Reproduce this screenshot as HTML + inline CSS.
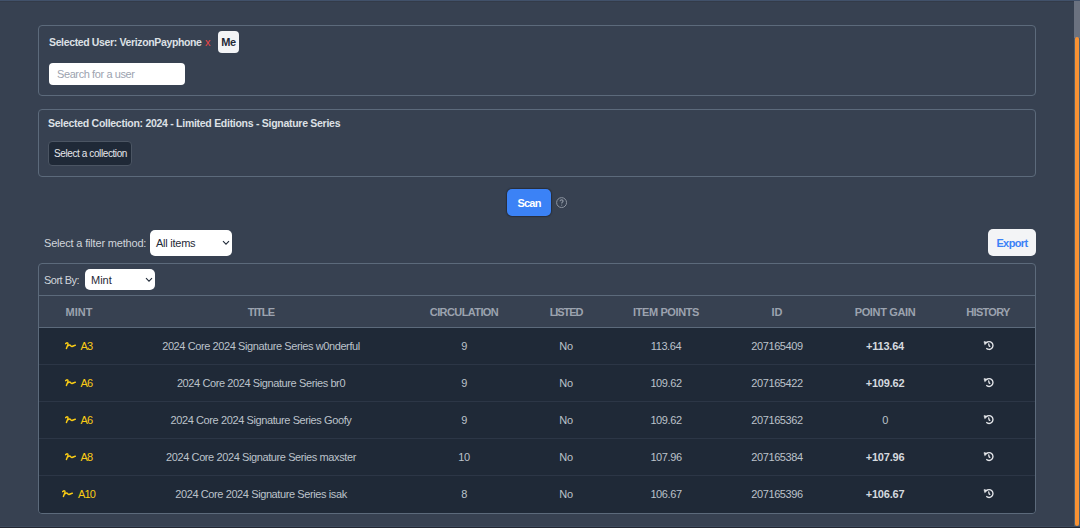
<!DOCTYPE html>
<html><head><meta charset="utf-8">
<style>
*{box-sizing:border-box;margin:0;padding:0}
html,body{width:1080px;height:528px;overflow:hidden;background:#374151;font-family:"Liberation Sans",sans-serif;color:#d1d5db}
.abs{position:absolute}
.nw{white-space:nowrap}
.topline{left:0;top:0;width:1080px;height:1px;background:#41516a}
.topline2{left:0;top:1px;width:1080px;height:1px;background:#333b49}
.botline{left:0;top:527px;width:1080px;height:1px;background:#222631}
.botline2{left:0;top:526px;width:1080px;height:1px;background:#3d4a5c}
.sb{left:1074px;top:1px;width:6px;height:40px;background:#6b7280}
.sb2{left:1074px;top:38px;width:6px;height:490px;background:#4f6070}
.thumb{left:1075px;top:37px;width:4px;height:489px;background:#f99233;border-radius:2px}
.box{border:1px solid #5c6a7b;border-radius:4px}
.b1{left:38px;top:25px;width:998px;height:71px}
.b2{left:38px;top:109px;width:998px;height:68px}
.h{font-size:11px;font-weight:bold;color:#dde0e5;white-space:nowrap;line-height:13px}
.btnw{background:#f3f4f6;border-radius:4px;color:#1f2937;font-weight:bold;font-size:11px;text-align:center}
.inp{background:#fff;border-radius:4px;color:#9ca3af;font-size:11px}
.sel{background:#fff;border-radius:5px;color:#1f2937;font-size:11px;white-space:nowrap}
.scan{left:507px;top:189px;width:44px;height:27px;background:#3b82f6;border-radius:5px;color:#fff;font-weight:bold;font-size:11px;text-align:center;line-height:29px;letter-spacing:-0.8px;box-shadow:0 0 1px 1px rgba(30,35,45,.6)}
.tbl{left:38px;top:263px;width:998px;height:251px;border:1px solid #5c6a7b;border-radius:4px;overflow:hidden}
table{border-collapse:collapse;table-layout:fixed;width:996px}
th{height:32px;font-size:11px;font-weight:bold;color:#9ca3af;text-align:center;border-top:1px solid #5c6a7b;border-bottom:1px solid #5c6a7b;background:#374151;padding-bottom:0px;white-space:nowrap}
td{height:37px;font-size:11px;color:#bcc2ca;text-align:center;border-bottom:1px solid #2c3646;background:#1f2937;padding-bottom:0px;white-space:nowrap;letter-spacing:-0.4px}
tr:last-child td{border-bottom:none}
.mint{color:#facc15;letter-spacing:-0.8px}
.mint svg{vertical-align:0px;margin-right:4px;margin-left:-1px}
.pg{font-weight:bold;color:#d5d9df;letter-spacing:-0.2px}
.chev{position:absolute}
</style></head>
<body>
<div class="abs topline"></div>
<div class="abs topline2"></div>

<div class="abs box b1"></div>
<div class="abs h" style="left:49px;top:36px;font-size:10.5px;letter-spacing:-0.36px">Selected User: VerizonPayphone</div>
<div class="abs nw" style="left:205px;top:36px;font-size:11px;line-height:13px;color:#ef4444">x</div>
<div class="abs btnw" style="left:218px;top:31px;width:21px;height:22px;line-height:22px;letter-spacing:-0.5px">Me</div>
<div class="abs inp nw" style="left:49px;top:63px;width:136px;height:22px;line-height:22px;padding-left:8px;letter-spacing:-0.4px">Search for a user</div>

<div class="abs box b2"></div>
<div class="abs h" style="left:48px;top:117px;font-size:10.5px;letter-spacing:-0.28px">Selected Collection: 2024 - Limited Editions - Signature Series</div>
<div class="abs nw" style="left:48px;top:141px;width:84px;height:25px;background:#1f2937;border:1px solid #4b5563;border-radius:4px;font-size:10px;color:#e5e7eb;line-height:23px;padding-left:5px;letter-spacing:-0.4px">Select a collection</div>

<div class="abs scan">Scan</div>
<svg class="abs" style="left:555px;top:196px" width="13" height="13" viewBox="0 0 13 13"><circle cx="6.6" cy="6.6" r="4.95" fill="none" stroke="#8d95a1" stroke-width="1"/><path d="M5.1 5.3 C5.1 4.2 6 3.8 6.6 3.8 C7.4 3.8 8.1 4.3 8.1 5.1 C8.1 6 6.7 6.1 6.7 7.4" fill="none" stroke="#8d95a1" stroke-width="1.15"/><circle cx="6.7" cy="9.1" r="0.6" fill="#8d95a1"/></svg>

<div class="abs nw" style="left:44px;top:237px;font-size:11px;line-height:13px;color:#d1d5db;letter-spacing:-0.18px">Select a filter method:</div>
<div class="abs sel" style="left:150px;top:230px;width:82px;height:26px;line-height:26px;padding-left:6px;letter-spacing:-0.25px">All items</div>
<svg class="abs" style="left:222px;top:240px" width="8" height="6" viewBox="0 0 8 6"><path d="M1 1.2 L4 4.2 L7 1.2" fill="none" stroke="#1f2937" stroke-width="1.05"/></svg>

<div class="abs btnw" style="left:988px;top:229px;width:48px;height:27px;line-height:29px;color:#3b82f6;border-radius:5px;letter-spacing:-0.6px">Export</div>

<div class="abs tbl">
  <div style="height:31px;position:relative">
    <div class="abs nw" style="left:5px;top:10px;font-size:11px;line-height:13px;color:#d1d5db;letter-spacing:-0.5px">Sort By:</div>
    <div class="abs sel" style="left:46px;top:5px;width:70px;height:21px;line-height:23px;padding-left:6px">Mint</div>
    <svg class="abs" style="left:106px;top:13px" width="8" height="6" viewBox="0 0 8 6"><path d="M1 1.2 L4 4.2 L7 1.2" fill="none" stroke="#1f2937" stroke-width="1.05"/></svg>
  </div>
  <table>
    <colgroup><col style="width:80px"><col style="width:284px"><col style="width:122px"><col style="width:82px"><col style="width:118px"><col style="width:104px"><col style="width:112px"><col style="width:94px"></colgroup>
    <thead><tr><th>MINT</th><th style="letter-spacing:-0.8px">TITLE</th><th style="letter-spacing:-0.6px">CIRCULATION</th><th style="letter-spacing:-1.1px">LISTED</th><th style="letter-spacing:-0.4px">ITEM POINTS</th><th>ID</th><th style="letter-spacing:-0.35px">POINT GAIN</th><th style="letter-spacing:-0.7px">HISTORY</th></tr></thead>
    <tbody>
      <tr><td class="mint"><svg width="12" height="8" viewBox="0 0 12 8"><path d="M0.7 1.7 C1.1 0.9 2 0.6 2.8 1.1 C3.6 1.7 2.1 4.6 1.4 6.4 M2.7 4 C3.5 3.3 4.3 2.7 5 3.1 C5.8 3.7 6.3 4.7 7.1 4.5 C8.1 4.2 9.2 3.3 10.3 3.3" fill="none" stroke="#facc15" stroke-width="1.5" stroke-linecap="round" stroke-linejoin="round"/></svg><span>A3</span></td><td>2024 Core 2024 Signature Series w0nderful</td><td>9</td><td>No</td><td>113.64</td><td>207165409</td><td class="pg">+113.64</td><td class="hi"><svg width="12" height="11" viewBox="0 0 12 11" style="position:relative;left:1px"><path d="M3.3 2.8 A3.9 3.9 0 1 1 3.3 8.3" fill="none" stroke="#e5e7eb" stroke-width="1.35"/><path d="M1 1.6 L4.4 2.3 L1.8 4.7 Z" fill="#e5e7eb" stroke="#e5e7eb" stroke-width="0.6" stroke-linejoin="round"/><path d="M5.7 3.9 L6.1 5.9 L6.8 6.4" fill="none" stroke="#e5e7eb" stroke-width="1.3" stroke-linecap="round"/></svg></td></tr>
      <tr><td class="mint"><svg width="12" height="8" viewBox="0 0 12 8"><path d="M0.7 1.7 C1.1 0.9 2 0.6 2.8 1.1 C3.6 1.7 2.1 4.6 1.4 6.4 M2.7 4 C3.5 3.3 4.3 2.7 5 3.1 C5.8 3.7 6.3 4.7 7.1 4.5 C8.1 4.2 9.2 3.3 10.3 3.3" fill="none" stroke="#facc15" stroke-width="1.5" stroke-linecap="round" stroke-linejoin="round"/></svg><span>A6</span></td><td>2024 Core 2024 Signature Series br0</td><td>9</td><td>No</td><td>109.62</td><td>207165422</td><td class="pg">+109.62</td><td class="hi"><svg width="12" height="11" viewBox="0 0 12 11" style="position:relative;left:1px"><path d="M3.3 2.8 A3.9 3.9 0 1 1 3.3 8.3" fill="none" stroke="#e5e7eb" stroke-width="1.35"/><path d="M1 1.6 L4.4 2.3 L1.8 4.7 Z" fill="#e5e7eb" stroke="#e5e7eb" stroke-width="0.6" stroke-linejoin="round"/><path d="M5.7 3.9 L6.1 5.9 L6.8 6.4" fill="none" stroke="#e5e7eb" stroke-width="1.3" stroke-linecap="round"/></svg></td></tr>
      <tr><td class="mint"><svg width="12" height="8" viewBox="0 0 12 8"><path d="M0.7 1.7 C1.1 0.9 2 0.6 2.8 1.1 C3.6 1.7 2.1 4.6 1.4 6.4 M2.7 4 C3.5 3.3 4.3 2.7 5 3.1 C5.8 3.7 6.3 4.7 7.1 4.5 C8.1 4.2 9.2 3.3 10.3 3.3" fill="none" stroke="#facc15" stroke-width="1.5" stroke-linecap="round" stroke-linejoin="round"/></svg><span>A6</span></td><td>2024 Core 2024 Signature Series Goofy</td><td>9</td><td>No</td><td>109.62</td><td>207165362</td><td>0</td><td class="hi"><svg width="12" height="11" viewBox="0 0 12 11" style="position:relative;left:1px"><path d="M3.3 2.8 A3.9 3.9 0 1 1 3.3 8.3" fill="none" stroke="#e5e7eb" stroke-width="1.35"/><path d="M1 1.6 L4.4 2.3 L1.8 4.7 Z" fill="#e5e7eb" stroke="#e5e7eb" stroke-width="0.6" stroke-linejoin="round"/><path d="M5.7 3.9 L6.1 5.9 L6.8 6.4" fill="none" stroke="#e5e7eb" stroke-width="1.3" stroke-linecap="round"/></svg></td></tr>
      <tr><td class="mint"><svg width="12" height="8" viewBox="0 0 12 8"><path d="M0.7 1.7 C1.1 0.9 2 0.6 2.8 1.1 C3.6 1.7 2.1 4.6 1.4 6.4 M2.7 4 C3.5 3.3 4.3 2.7 5 3.1 C5.8 3.7 6.3 4.7 7.1 4.5 C8.1 4.2 9.2 3.3 10.3 3.3" fill="none" stroke="#facc15" stroke-width="1.5" stroke-linecap="round" stroke-linejoin="round"/></svg><span>A8</span></td><td>2024 Core 2024 Signature Series maxster</td><td>10</td><td>No</td><td>107.96</td><td>207165384</td><td class="pg">+107.96</td><td class="hi"><svg width="12" height="11" viewBox="0 0 12 11" style="position:relative;left:1px"><path d="M3.3 2.8 A3.9 3.9 0 1 1 3.3 8.3" fill="none" stroke="#e5e7eb" stroke-width="1.35"/><path d="M1 1.6 L4.4 2.3 L1.8 4.7 Z" fill="#e5e7eb" stroke="#e5e7eb" stroke-width="0.6" stroke-linejoin="round"/><path d="M5.7 3.9 L6.1 5.9 L6.8 6.4" fill="none" stroke="#e5e7eb" stroke-width="1.3" stroke-linecap="round"/></svg></td></tr>
      <tr><td class="mint"><svg width="12" height="8" viewBox="0 0 12 8"><path d="M0.7 1.7 C1.1 0.9 2 0.6 2.8 1.1 C3.6 1.7 2.1 4.6 1.4 6.4 M2.7 4 C3.5 3.3 4.3 2.7 5 3.1 C5.8 3.7 6.3 4.7 7.1 4.5 C8.1 4.2 9.2 3.3 10.3 3.3" fill="none" stroke="#facc15" stroke-width="1.5" stroke-linecap="round" stroke-linejoin="round"/></svg><span>A10</span></td><td>2024 Core 2024 Signature Series isak</td><td>8</td><td>No</td><td>106.67</td><td>207165396</td><td class="pg">+106.67</td><td class="hi"><svg width="12" height="11" viewBox="0 0 12 11" style="position:relative;left:1px"><path d="M3.3 2.8 A3.9 3.9 0 1 1 3.3 8.3" fill="none" stroke="#e5e7eb" stroke-width="1.35"/><path d="M1 1.6 L4.4 2.3 L1.8 4.7 Z" fill="#e5e7eb" stroke="#e5e7eb" stroke-width="0.6" stroke-linejoin="round"/><path d="M5.7 3.9 L6.1 5.9 L6.8 6.4" fill="none" stroke="#e5e7eb" stroke-width="1.3" stroke-linecap="round"/></svg></td></tr>
    </tbody>
  </table>
</div>

<div class="abs sb"></div>
<div class="abs sb2"></div>
<div class="abs thumb"></div>
<div class="abs botline2"></div>
<div class="abs botline"></div>
</body></html>
